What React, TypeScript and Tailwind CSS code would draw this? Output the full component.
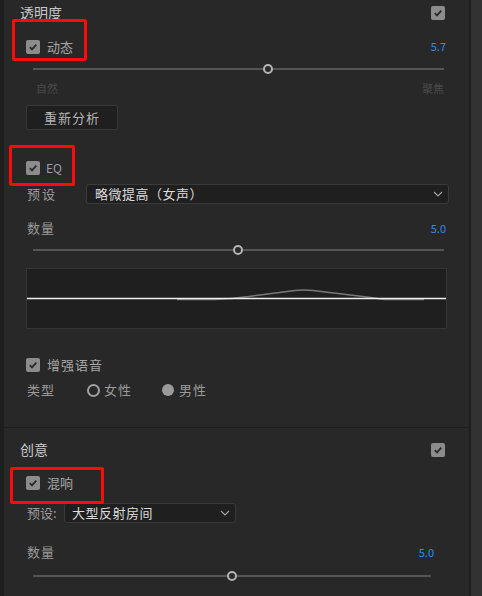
import React from 'react';

const font = { fontFamily: '"Noto Sans CJK SC", "Noto Sans", sans-serif' };

const Check: React.FC = () => (
  <div className="w-[14px] h-[14px] rounded-[2px] bg-[#8c8c8c] flex items-center justify-center shrink-0">
    <svg width="10" height="10" viewBox="0 0 10 10">
      <path d="M1.8 5.2 L4 7.4 L8.3 2.6" fill="none" stroke="#2a2a2a" strokeWidth="1.8" />
    </svg>
  </div>
);

const Slider: React.FC<{ pos: number; className?: string }> = ({ pos, className }) => (
  <div className={`relative h-[12px] flex items-center ${className ?? ''}`}>
    <div className="h-[2px] w-full bg-[#555555]" />
    <div
      className="absolute top-[1px] w-[10px] h-[10px] rounded-full border-2 border-[#b4b4b4] bg-[#2a2a2a] -translate-x-1/2"
      style={{ left: pos }}
    />
  </div>
);

const Chevron: React.FC = () => (
  <svg width="10" height="6" viewBox="0 0 10 6">
    <path d="M1 1 L5 5 L9 1" fill="none" stroke="#a0a0a0" strokeWidth="1.2" />
  </svg>
);

const Header: React.FC<{ title: string }> = ({ title }) => (
  <div className="h-[25px] flex items-center justify-between pl-[16px] pr-[24px]">
    <span className="text-[14px] text-[#c8c8c8]">{title}</span>
    <Check />
  </div>
);

export default function App() {
  return (
    <div className="relative w-[482px] h-[596px] overflow-hidden bg-[#282828] flex" style={font}>
      <div className="w-[4px] bg-[#1e1e1e]" />
      <div className="flex-1 flex flex-col">
        {/* 透明度 */}
        <Header title="透明度" />
        <div className="mt-[9px] h-[25px] flex items-center pl-[22px] pr-[23px]">
          <Check />
          <span className="ml-[7px] text-[13px] text-[#a6a6a6]">动态</span>
          <span className="ml-auto text-[11px] text-[#2d8cf0]">5.7</span>
        </div>
        <Slider pos={235} className="mt-[4px] ml-[29px] mr-[25px]" />
        <div className="mt-[6px] h-[14px] flex justify-between pl-[32px] pr-[25px] text-[11px] leading-[14px] text-[#4a4a4a]">
          <span>自然</span>
          <span>聚焦</span>
        </div>
        <div className="mt-[10px] ml-[22px] w-[92px] h-[25px] rounded-[2px] border border-[#383838] bg-[#1f1f1f] flex items-center justify-center text-[13px] text-[#b4b4b4] tracking-[1px]">
          重新分析
        </div>

        <div className="mt-[25px] h-[25px] flex items-center pl-[22px]">
          <Check />
          <span className="ml-[6px] text-[12px] text-[#9c9cb0]">EQ</span>
        </div>
        <div className="mt-[4px] h-[20px] flex items-center pl-[23px] pr-[20px]">
          <span className="w-[59px] text-[13px] text-[#9a9a9a] tracking-[2px]">预设</span>
          <div className="flex-1 h-[20px] rounded-[3px] border border-[#3a3a3a] bg-[#1f1f1f] flex items-center pl-[8px] pr-[5px]">
            <span className="text-[13px] text-[#dcdcdc] tracking-[0.5px]">略微提高（女声）</span>
            <span className="ml-auto"><Chevron /></span>
          </div>
        </div>
        <div className="mt-[14px] h-[20px] flex items-center pl-[23px] pr-[23px]">
          <span className="text-[13px] text-[#9a9a9a] tracking-[1px]">数量</span>
          <span className="ml-auto text-[11px] text-[#2d8cf0]">5.0</span>
        </div>
        <Slider pos={205} className="mt-[6px] ml-[29px] mr-[25px]" />
        <div className="mt-[12px] ml-[22px] mr-[22px] h-[61px] border border-[#353535] bg-[#1f1f1f]">
          <svg width="419" height="59" viewBox="0 0 419 59">
            <path
              d="M150 30.5 L188 30.5 C 200 30 210 29 222 27.5 L 268 21.5 C 274 20.8 280 20.8 286 21.6 L 344 28.6 C 348 29.2 352 30 358 30.5 L 397 30.5"
              fill="none"
              stroke="#7a7a7a"
              strokeWidth="1.5"
            />
            <line x1="0" y1="29.5" x2="419" y2="29.5" stroke="#f0f0f0" strokeWidth="1.3" />
          </svg>
        </div>
        <div className="mt-[23px] h-[25px] flex items-center pl-[22px]">
          <Check />
          <span className="ml-[7px] text-[13px] text-[#a6a6a6] tracking-[1px]">增强语音</span>
        </div>
        <div className="mt-[3px] h-[20px] flex items-center pl-[23px] text-[13px] text-[#9a9a9a]">
          <span className="w-[60px] tracking-[1px]">类型</span>
          <div className="w-[13px] h-[13px] rounded-full border-2 border-[#a0a0a0]" />
          <span className="ml-[4px] w-[58px] tracking-[1px]">女性</span>
          <div className="w-[12px] h-[12px] rounded-full bg-[#9a9a9a]" />
          <span className="ml-[5px] tracking-[1px]">男性</span>
        </div>
        <div className="mt-[27px] h-[1px] bg-[#1e1e1e]" />

        {/* 创意 */}
        <div className="mt-[9px]">
          <Header title="创意" />
        </div>
        <div className="mt-[8px] h-[25px] flex items-center pl-[22px]">
          <Check />
          <span className="ml-[7px] text-[13px] text-[#a6a6a6]">混响</span>
        </div>
        <div className="mt-[8px] h-[20px] flex items-center pl-[23px]">
          <span className="w-[37px] text-[13px] text-[#9a9a9a]">预设:</span>
          <div className="w-[172px] h-[20px] rounded-[3px] border border-[#3a3a3a] bg-[#1f1f1f] flex items-center pl-[7px] pr-[5px]">
            <span className="text-[13px] text-[#dcdcdc] tracking-[0.5px]">大型反射房间</span>
            <span className="ml-auto"><Chevron /></span>
          </div>
        </div>
        <div className="mt-[19px] h-[20px] flex items-center pl-[23px] pr-[35px]">
          <span className="text-[13px] text-[#9a9a9a] tracking-[1px]">数量</span>
          <span className="ml-auto text-[11px] text-[#2d8cf0]">5.0</span>
        </div>
        <Slider pos={199} className="mt-[8px] ml-[29px] mr-[38px]" />
      </div>
      <div className="w-[2px] bg-[#1e1e1e]" />
      <div className="w-[11px] bg-[#323232]" />

      {/* highlight boxes */}
      <div className="absolute left-[12px] top-[19px] w-[75px] h-[42px] border-[3px] border-[#ff0a0a] rounded-[2px]" />
      <div className="absolute left-[9px] top-[145px] w-[66px] h-[41px] border-[3px] border-[#ff0a0a] rounded-[2px]" />
      <div className="absolute left-[10px] top-[467px] w-[94px] h-[37px] border-[3px] border-[#ff0a0a] rounded-[2px]" />
    </div>
  );
}
